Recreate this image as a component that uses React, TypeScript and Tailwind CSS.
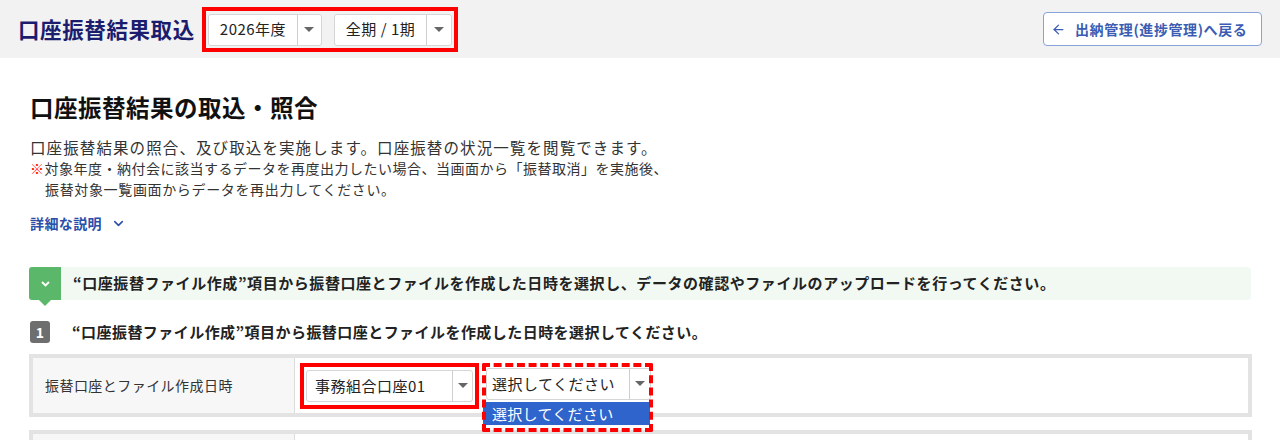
import React from "react";
import { ArrowLeft, ChevronDown } from "lucide-react";

const font = { fontFamily: '"Noto Sans CJK JP", "Noto Sans", sans-serif' };

function Caret() {
  return (
    <svg width="10" height="6" viewBox="0 0 10 6">
      <path d="M0 0 L10 0 L5 5 Z" fill="#666" />
    </svg>
  );
}

function Select({ label, textW, arrowW, h = "h-[32px]", pl = "pl-[11px]" }: { label: string; textW: string; arrowW: string; h?: string; pl?: string }) {
  return (
    <div className={`flex ${h} bg-white border border-[#d6d6d6] rounded-[3px]`}>
      <div className={`${textW} ${pl} flex items-center text-[15px] tracking-[0.5px] text-[#222] whitespace-nowrap`}>{label}</div>
      <div className={`${arrowW} flex items-center justify-center border-l border-[#cfcfcf]`}>
        <Caret />
      </div>
    </div>
  );
}

export default function App() {
  return (
    <div style={font} className="w-[1280px] h-[440px] overflow-hidden bg-white">
      {/* header */}
      <div className="h-[58px] bg-[#f2f2f2] flex items-center pl-[18px] pr-[18px]">
        <div className="text-[21.5px] font-bold text-[#1b1c6e] tracking-[0.6px]">口座振替結果取込</div>
        <div className="ml-[7px] border-[4px] border-[#ff0000] pt-[3px] pb-[2px] px-[2px] flex gap-[12px]">
          <Select label="2026年度" textW="w-[88px]" arrowW="w-[24px]" />
          <Select label="全期 / 1期" textW="w-[91px]" arrowW="w-[25px]" />
        </div>
        <div className="ml-auto h-[34px] w-[219px] border border-[#86a3da] rounded-[4px] bg-white flex items-center pl-[7px] gap-[9px] text-[#3a5cb3] text-[14px] tracking-[0.6px] font-bold">
          <ArrowLeft size={15} strokeWidth={2} />
          <span>出納管理(進捗管理)へ戻る</span>
        </div>
      </div>

      {/* main */}
      <div className="px-[29px]">
        <h1 className="mt-[33px] h-[32px] leading-[32px] text-[23.5px] font-bold text-[#111] pl-[1px] tracking-[0.5px]">口座振替結果の取込・照合</h1>
        <div className="mt-[14px] text-[#333] pl-[1px]">
          <div className="text-[15.5px] leading-[20px] tracking-[1.1px]">口座振替結果の照合、及び取込を実施します。口座振替の状況一覧を閲覧できます。</div>
          <div className="text-[14px] leading-[21px] mt-[1px] tracking-[0.5px]"><span className="text-[#ff0000]">※</span>対象年度・納付会に該当するデータを再度出力したい場合、当画面から「振替取消」を実施後、</div>
          <div className="text-[14px] leading-[20px] pl-[15px] tracking-[0.65px]">振替対象一覧画面からデータを再出力してください。</div>
        </div>
        <div className="mt-[14px] h-[20px] flex items-center gap-[9px] text-[14px] font-bold text-[#2b4fa8] pl-[1px] tracking-[0.4px]">
          <span>詳細な説明</span>
          <ChevronDown size={15} strokeWidth={2.5} />
        </div>

        {/* green bar */}
        <div className="mt-[34px] h-[33px] bg-[#f1f9f2] rounded-[4px] flex items-center">
          <div className="relative w-[32px] h-[33px] bg-[#5bb86a] rounded-l-[3px] flex items-center justify-center">
            <svg width="9" height="6" viewBox="0 0 9 6"><path d="M1 1 L4.5 4.5 L8 1" stroke="#fff" strokeWidth="1.8" fill="none" /></svg>
            <div className="absolute left-[10px] top-[33px] w-0 h-0 border-l-[6px] border-r-[6px] border-t-[6px] border-l-transparent border-r-transparent border-t-[#5bb86a]" />
          </div>
          <div className="ml-[12px] text-[15px] font-bold text-[#222] tracking-[0.57px] whitespace-nowrap">“口座振替ファイル作成”項目から振替口座とファイルを作成した日時を選択し、データの確認やファイルのアップロードを行ってください。</div>
        </div>

        {/* step 1 */}
        <div className="mt-[21px] h-[22px] flex items-center">
          <div className="w-[20px] h-[22px] ml-[1px] bg-[#6e6e6e] rounded-[3px] text-white text-[14px] font-bold flex items-center justify-center">1</div>
          <div className="ml-[22px] text-[15px] font-bold text-[#222] tracking-[0.45px]">“口座振替ファイル作成”項目から振替口座とファイルを作成した日時を選択してください。</div>
        </div>

        {/* table */}
        <div className="mt-[11px] w-[1223px] border-[4px] border-[#e3e3e3] flex h-[63px]">
          <div className="w-[262px] bg-[#f7f7f7] border-r border-[#dcdcdc] flex items-center pl-[12px] text-[14px] text-[#333] tracking-[0.45px]">振替口座とファイル作成日時</div>
          <div className="flex-1 pl-[5px] pt-[5px] flex items-start gap-[6px]">
            <div className="border-[4px] border-[#ff0000] pt-[3px] pb-[3px] px-[2px]">
              <Select label="事務組合口座01" textW="w-[145px]" arrowW="w-[20px]" pl="pl-[8px]" />
            </div>
            <div className="relative w-[171px] h-[69px] -ml-[3px]">
              <div className="absolute left-[4px] top-[5px]">
                <Select label="選択してください" textW="w-[142px]" arrowW="w-[21px]" pl="pl-[5px]" />
              </div>
              <div className="absolute left-[1px] top-[39px] w-[167px] h-[23px] bg-[#2f64cc] text-white text-[15px] tracking-[0.3px] leading-[23px] pl-[9px]">選択してください</div>
              <div className="absolute inset-0 border-[4px] border-dashed border-[#ff0000] rounded-[2px]" />
            </div>
          </div>
        </div>

        <div className="mt-[13px] w-[1223px] border-[4px] border-[#e3e3e3] flex h-[63px]">
          <div className="w-[262px] bg-[#f7f7f7] border-r border-[#dcdcdc]" />
          <div className="flex-1" />
        </div>
      </div>
    </div>
  );
}
